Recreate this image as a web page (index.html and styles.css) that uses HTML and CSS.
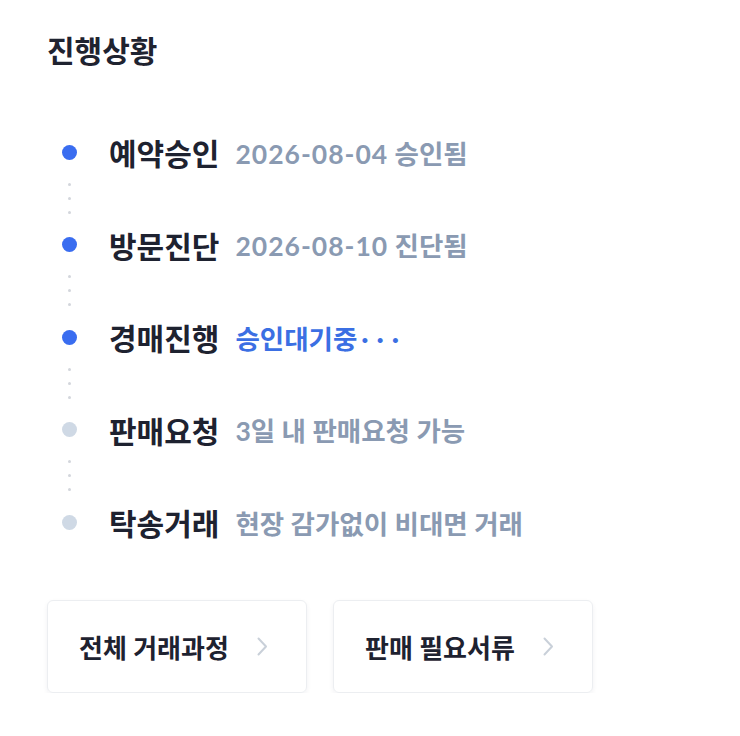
FILE: index.html
```html
<!DOCTYPE html>
<html lang="ko">

<head>
    <meta charset="UTF-8">
    <meta name="viewport" content="width=device-width, initial-scale=1.0">
    <title>진행상황</title>
    <link rel="stylesheet" href="styles.css">
</head>

<body>
    <div class="progress">
        <h2 class="title">진행상황</h2>

        <ul class="steps">
            <li class="step done">
                <span class="dot"></span>
                <strong class="label">예약승인</strong>
                <span class="desc"><em class="date">2026-08-04</em> 승인됨</span>
            </li>
            <li class="line"><i></i><i></i><i></i></li>
            <li class="step done">
                <span class="dot"></span>
                <strong class="label">방문진단</strong>
                <span class="desc"><em class="date">2026-08-10</em> 진단됨</span>
            </li>
            <li class="line"><i></i><i></i><i></i></li>
            <li class="step done current">
                <span class="dot"></span>
                <strong class="label">경매진행</strong>
                <span class="desc">승인대기중<em class="wait">···</em></span>
            </li>
            <li class="line"><i></i><i></i><i></i></li>
            <li class="step">
                <span class="dot"></span>
                <strong class="label">판매요청</strong>
                <span class="desc">3일 내 판매요청 가능</span>
            </li>
            <li class="line"><i></i><i></i><i></i></li>
            <li class="step">
                <span class="dot"></span>
                <strong class="label">탁송거래</strong>
                <span class="desc">현장 감가없이 비대면 거래</span>
            </li>
        </ul>

        <div class="links">
            <a href="#" class="linkBtn">
                <span>전체 거래과정</span>
                <svg class="arrow" width="11" height="19" viewBox="0 0 11 19"><polyline points="1.5,1.5 9,9.5 1.5,17.5" fill="none" stroke="#c9d0d9" stroke-width="2" stroke-linecap="round" stroke-linejoin="round"/></svg>
            </a>
            <a href="#" class="linkBtn">
                <span>판매 필요서류</span>
                <svg class="arrow" width="11" height="19" viewBox="0 0 11 19"><polyline points="1.5,1.5 9,9.5 1.5,17.5" fill="none" stroke="#c9d0d9" stroke-width="2" stroke-linecap="round" stroke-linejoin="round"/></svg>
            </a>
        </div>
    </div>
</body>

</html>
```

FILE: styles.css
```css
* {
    margin: 0;
    padding: 0;
    list-style: none;
    box-sizing: border-box;
}

body {
    background: #fff;
    font-family: Lato, "Noto Sans CJK KR", sans-serif;
    color: #1e2230;
}

.progress {
    padding: 32px 47px 0;
}

.progress .title {
    font-size: 30px;
    line-height: 36px;
    font-weight: 700;
    color: #1f2330;
}

.steps {
    margin-top: 66px;
}

.steps .step {
    display: flex;
    align-items: center;
    height: 36px;
    white-space: nowrap;
}

.steps .dot {
    flex: none;
    width: 15px;
    height: 15px;
    margin-left: 15px;
    margin-right: 32px;
    border-radius: 50%;
    background-color: #cfd9e5;
}

.steps .done .dot {
    background-color: #3a6df0;
}

.steps .label {
    font-size: 30px;
    font-weight: 700;
    color: #1e2230;
}

.steps .desc {
    margin-left: 16px;
    font-size: 26.5px;
    font-weight: 700;
    color: #8a9ab2;
}

.steps .current .desc {
    color: #3b6fe3;
}

.steps .desc em {
    font-style: normal;
}

.steps .desc .date {
    letter-spacing: 1px;
}

.steps .desc .wait {
    margin-left: 4px;
    letter-spacing: 8px;
}

.steps .line {
    display: flex;
    flex-direction: column;
    justify-content: center;
    gap: 11px;
    height: 56.5px;
    padding-left: 21px;
}

.steps .line i {
    display: block;
    width: 3px;
    height: 3px;
    border-radius: 50%;
    background-color: #d3d6dc;
}

.links {
    display: flex;
    gap: 26px;
    margin-top: 60px;
}

.linkBtn {
    display: flex;
    align-items: center;
    width: 260px;
    height: 93px;
    padding-left: 31px;
    border: 1px solid #eceef1;
    border-radius: 6px;
    box-shadow: 0 2px 5px rgba(30, 40, 60, 0.06);
    text-decoration: none;
    font-size: 26px;
    font-weight: 700;
    color: #1e2230;
}

.linkBtn .arrow {
    margin-left: 28px;
}
```
